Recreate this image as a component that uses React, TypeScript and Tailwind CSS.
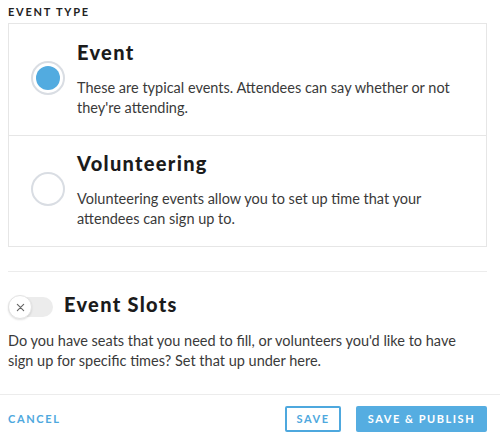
import { useState } from 'react'

type Option = {
  id: string
  title: string
  description: string
}

const options: Option[] = [
  {
    id: 'event',
    title: 'Event',
    description: "These are typical events. Attendees can say whether or not they're attending.",
  },
  {
    id: 'volunteering',
    title: 'Volunteering',
    description: 'Volunteering events allow you to set up time that your attendees can sign up to.',
  },
]

function Radio({ checked }: { checked: boolean }) {
  return (
    <div className="w-[34px] h-[34px] shrink-0 rounded-full border-2 border-[#d9dde3] bg-white flex items-center justify-center">
      {checked && <div className="w-[24px] h-[24px] rounded-full bg-[#52abe0]"></div>}
    </div>
  )
}

export default function App() {
  const [type, setType] = useState('event')
  const [slots, setSlots] = useState(false)

  return (
    <div className="w-[500px] h-[443px] bg-white flex flex-col font-['Lato','Open_Sans',sans-serif] text-[#333]">
      <div className="pl-2 pr-[13px] flex-1">
        {/* Event type */}
        <div className="h-[23px] pt-[5px] text-[11px] leading-[13px] font-bold tracking-[0.16em] text-[#222]">
          EVENT TYPE
        </div>
        <div className="border border-[#e6e6e6]">
          {options.map((opt, i) => (
            <button
              key={opt.id}
              onClick={() => setType(opt.id)}
              className={`w-full flex items-center text-left pl-[22px] pr-4 ${
                i > 0 ? 'border-t border-[#e6e6e6] pt-[13px] pb-[17px]' : 'pt-[14px] pb-[17px]'
              }`}
            >
              <Radio checked={type === opt.id} />
              <div className="ml-3">
                <h3 className="text-[20px] leading-[28px] font-black tracking-[0.065em] text-[#1b1b1b]">{opt.title}</h3>
                <p className="mt-3 text-[14.5px] leading-[20px] text-[#3a3a3a]">{opt.description}</p>
              </div>
            </button>
          ))}
        </div>

        <div className="mt-[24px] border-t border-[#ececec]"></div>

        {/* Event slots */}
        <div className="mt-[18px] flex items-center">
          <button
            onClick={() => setSlots(!slots)}
            className="relative w-[45px] h-[20px] mt-[6px] rounded-full bg-[#ececec] shrink-0"
          >
            <span className="absolute left-0 top-[-2px] w-[24px] h-[24px] rounded-full bg-white border border-[#e3e3e3] shadow-[0_1px_2px_rgba(0,0,0,0.12)] flex items-center justify-center text-[#666]">
              <svg width="9" height="9" viewBox="0 0 10 10" fill="none" stroke="currentColor" strokeWidth="1.3" strokeLinecap="round">
                <path d="M1.5 1.5l7 7M8.5 1.5l-7 7" />
              </svg>
            </span>
          </button>
          <h3 className="ml-[11px] text-[20px] leading-[28px] font-black tracking-[0.065em] text-[#1b1b1b]">Event Slots</h3>
        </div>
        <p className="mt-[13px] pr-[12px] text-[14.5px] leading-[20px] text-[#3a3a3a]">
          Do you have seats that you need to fill, or volunteers you'd like to have sign up for specific times? Set
          that up under here.
        </p>
      </div>

      {/* Footer */}
      <div className="border-t border-[#ececec] h-[49px] flex items-center pl-2 pr-[13px]">
        <button className="text-[11px] font-bold tracking-[0.15em] text-[#4ea8de]">CANCEL</button>
        <div className="ml-auto flex items-center gap-[15px]">
          <button className="h-[26px] w-[56px] border-2 border-[#4ea8de] rounded-[2px] text-[11px] font-bold tracking-[0.14em] text-[#4ea8de] flex items-center justify-center">
            SAVE
          </button>
          <button className="h-[26px] w-[131px] bg-[#55ade1] rounded-[2px] text-[11px] font-bold tracking-[0.14em] text-white flex items-center justify-center">
            SAVE &amp; PUBLISH
          </button>
        </div>
      </div>
    </div>
  )
}
